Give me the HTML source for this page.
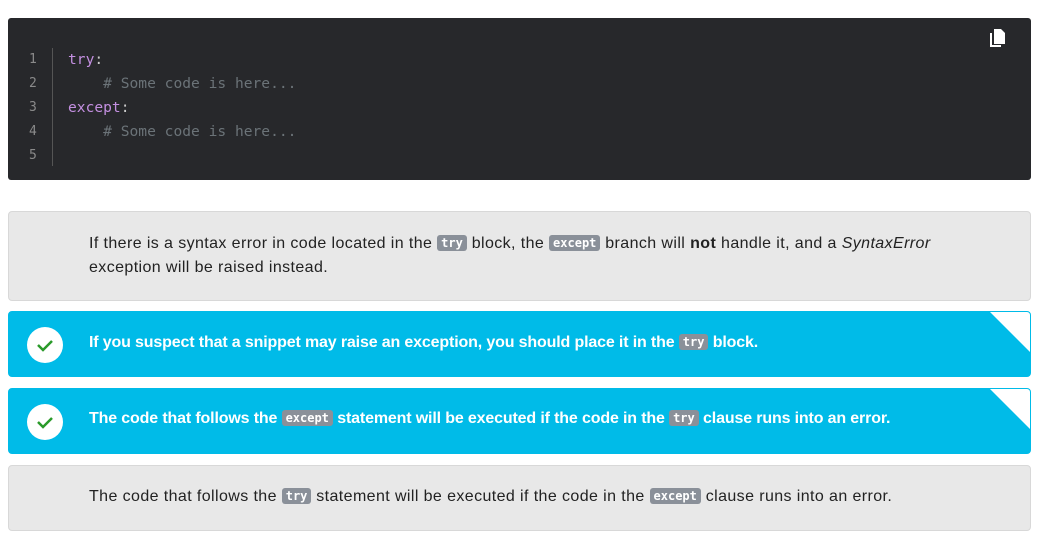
<!DOCTYPE html>
<html><head><style>
body{margin:0;background:#fff;width:1054px;height:547px;position:relative;font-family:"Liberation Sans",sans-serif;}
.code{position:absolute;left:8px;top:18px;width:1023px;height:162px;background:#27282b;border-radius:3px;}
.ln{position:absolute;left:18px;top:30px;width:27px;border-right:1px solid #555;font:13px/24px "DejaVu Sans Mono",monospace;color:#8a8a8a;padding-left:3px;box-sizing:border-box;height:118px;}
.src{position:absolute;left:60px;top:30px;font:14.6px/24px "DejaVu Sans Mono",monospace;color:#ccc;white-space:pre;}
.k{color:#c38fe0}.c{color:#6b7378}
.card{position:absolute;left:8px;width:1023px;box-sizing:border-box;border-radius:4px;font-size:16px;line-height:24px;}
.g{background:#e8e8e8;border:1px solid #d8d8d8;color:#222;letter-spacing:0.4px;}
.b{background:#00bbe8;color:#fff;font-weight:bold;overflow:hidden;letter-spacing:-0.15px;border:1px solid #00bbe8;}
.t{position:absolute;left:80px;}
.tag{display:inline-block;background:#8a9099;color:#fff;font:bold 12px/16px "DejaVu Sans Mono",monospace;padding:0 4px;border-radius:3px;vertical-align:1px;letter-spacing:0;}
.chk{position:absolute;left:18px;top:15px;width:36px;height:36px;border-radius:50%;background:#fff;}
.tri{position:absolute;right:0;top:0;width:0;height:0;border-top:40px solid #fff;border-left:40px solid transparent;}
</style></head><body>
<div class="code">
<div class="ln">1<br>2<br>3<br>4<br>5</div>
<div class="src"><span class="k">try</span>:
    <span class="c"># Some code is here...</span>
<span class="k">except</span>:
    <span class="c"># Some code is here...</span>
</div>
<svg style="position:absolute;left:982px;top:11px" width="16" height="18" viewBox="0 0 16 18"><path d="M0 4h2v12h9v2H0z" fill="#fff"/><path d="M4 0h7l4 4v11H4z" fill="#fff"/></svg>
</div>
<div class="card g" style="top:211px;height:90px"><div class="t" style="top:20px">If there is a syntax error in code located in the <span class="tag">try</span> block, the <span class="tag">except</span> branch will <b>not</b> handle it, and a <i>SyntaxError</i><br>exception will be raised instead.</div></div>
<div class="card b" style="top:311px;height:66px"><div class="chk"><svg width="36" height="36"><path d="M11 18l5 5 9-9" stroke="#2a9a2a" stroke-width="2.5" fill="none"/></svg></div><div class="tri"></div><div class="t" style="top:19px">If you suspect that a snippet may raise an exception, you should place it in the <span class="tag">try</span> block.</div></div>
<div class="card b" style="top:388px;height:66px"><div class="chk"><svg width="36" height="36"><path d="M11 18l5 5 9-9" stroke="#2a9a2a" stroke-width="2.5" fill="none"/></svg></div><div class="tri"></div><div class="t" style="top:18px">The code that follows the <span class="tag">except</span> statement will be executed if the code in the <span class="tag">try</span> clause runs into an error.</div></div>
<div class="card g" style="top:465px;height:66px"><div class="t" style="top:19px">The code that follows the <span class="tag">try</span> statement will be executed if the code in the <span class="tag">except</span> clause runs into an error.</div></div>
</body></html>
